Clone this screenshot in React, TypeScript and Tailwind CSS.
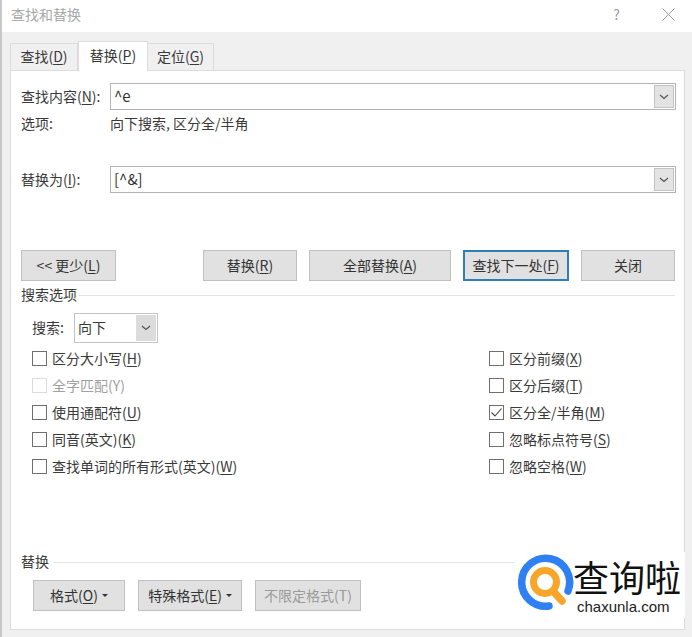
import React from 'react'

const Key = ({ k }: { k: string }) => (
  <>
    (<span className="underline underline-offset-2">{k}</span>)
  </>
)

const Chevron = () => (
  <svg width="10" height="6" viewBox="0 0 10 6" fill="none" stroke="#555" strokeWidth="1.2">
    <path d="M1 1l4 3.5L9 1" />
  </svg>
)

const Combo = ({ value }: { value: string }) => (
  <div className="flex h-[27px] w-[566px] items-center justify-between border border-[#b4b4b4] bg-white pr-[1px] pl-[3px] text-[#333]">
    <span className="pb-[3px] text-[15px] leading-none">{value}</span>
    <div className="flex h-[23px] w-[20px] items-center justify-center border border-[#c4c4c4] bg-[#e3e3e3]">
      <Chevron />
    </div>
  </div>
)

const Btn = ({
  w,
  children,
  focused,
  disabled,
}: {
  w: string
  children: React.ReactNode
  focused?: boolean
  disabled?: boolean
}) => (
  <button
    className={
      w +
      ' flex h-[31px] items-center justify-center border bg-[#e1e1e1] pb-[1px] ' +
      (focused ? 'border-2 border-[#2f7fb5] ' : 'border-[#c0c0c0] ') +
      (disabled ? 'text-[#9a9a9a]' : 'text-[#333]')
    }>
    {children}
  </button>
)

const Check = ({
  children,
  checked,
  disabled,
}: {
  children: React.ReactNode
  checked?: boolean
  disabled?: boolean
}) => (
  <div className={'flex h-[27px] items-center gap-[5px] ' + (disabled ? 'text-[#a0a0a0]' : 'text-[#3a3a3a]')}>
    <div
      className={
        'flex h-[15px] w-[15px] items-center justify-center border bg-white ' +
        (disabled ? 'border-[#dcdcdc]' : 'border-[#6f6f6f]')
      }>
      {checked && (
        <svg width="13" height="11" viewBox="0 0 13 11" fill="none" stroke="#444" strokeWidth="1.1">
          <path d="M1.5 5.5l3.5 3.5 6.5-7.5" />
        </svg>
      )}
    </div>
    <span className="pb-[1px]">{children}</span>
  </div>
)

const Caret = () => <span className="ml-[4px] inline-block border-x-[3px] border-t-[3px] border-x-transparent border-t-[#333]" />

const App = () => {
  return (
    <div
      className="relative flex h-[637px] w-[692px] flex-col overflow-hidden border-l-2 border-[#c8c8c8] bg-[#f0f0f0] text-[14px] text-[#3a3a3a]"
      style={{ fontFamily: '"Noto Sans CJK SC", "Noto Sans", sans-serif' }}>
      <header className="flex h-[32px] shrink-0 items-center justify-between bg-white pr-[17px] pb-[4px] pl-[9px]">
        <span className="text-[14px] text-[#a8a8a8]">查找和替换</span>
        <div className="flex items-center gap-[42px] text-[#9a9a9a]">
          <span className="text-[14px] leading-none">?</span>
          <svg width="13" height="13" viewBox="0 0 13 13" stroke="#9a9a9a" strokeWidth="1">
            <path d="M.5.5l12 12M12.5.5l-12 12" />
          </svg>
        </div>
      </header>

      <div className="flex h-[38px] shrink-0 items-end pl-[8px]">
        <div className="flex h-[27px] w-[68px] items-center justify-center border border-b-0 border-[#dcdcdc] bg-[#f0f0f0] pb-[2px]">
          查找<Key k="D" />
        </div>
        <div className="z-10 -mb-px flex h-[30px] w-[70px] items-center justify-center border border-b-0 border-[#dcdcdc] bg-white pb-[3px]">
          替换<Key k="P" />
        </div>
        <div className="flex h-[27px] w-[66px] items-center justify-center border border-b-0 border-l-0 border-[#dcdcdc] bg-[#f0f0f0] pb-[2px]">
          定位<Key k="G" />
        </div>
      </div>

      <main className="relative mr-[7px] ml-[8px] h-[560px] border border-[#dcdcdc] bg-white pt-[12px] pl-[10px]">
        <div className="flex items-center">
          <span className="w-[89px]">
            查找内容<Key k="N" />:
          </span>
          <Combo value="^e" />
        </div>
        <div className="mt-[1px] flex h-[24px] items-center">
          <span className="w-[89px]">选项:</span>
          <span>向下搜索, 区分全/半角</span>
        </div>
        <div className="mt-[31px] flex items-center">
          <span className="w-[89px]">
            替换为<Key k="I" />:
          </span>
          <Combo value="[^&]" />
        </div>

        <div className="mt-[57px] flex">
          <Btn w="w-[95px]">
            &lt;&lt; 更少<Key k="L" />
          </Btn>
          <div className="ml-[87px] flex gap-[12px]">
            <Btn w="w-[94px]">
              替换<Key k="R" />
            </Btn>
            <Btn w="w-[142px]">
              全部替换<Key k="A" />
            </Btn>
            <Btn w="w-[106px]" focused>
              查找下一处<Key k="F" />
            </Btn>
            <Btn w="w-[94px]">关闭</Btn>
          </div>
        </div>

        <div className="mt-[4px] flex h-[20px] items-center">
          <span className="pr-[1px] pb-[2px]">搜索选项</span>
          <div className="mr-[9px] h-px flex-1 bg-[#e4e4e4]" />
        </div>

        <div className="mt-[8px] flex items-center pl-[11px]">
          <span className="w-[42px] pb-[1px]">搜索:</span>
          <div className="flex h-[30px] w-[84px] items-center justify-between border border-[#c4c4c4] pr-[1px] pl-[3px]">
            <span className="pb-[1px]">向下</span>
            <div className="flex h-[26px] w-[20px] items-center justify-center bg-[#dcdcdc]">
              <Chevron />
            </div>
          </div>
        </div>

        <div className="mt-[2px] flex pl-[11px]">
          <div className="w-[457px]">
            <Check>
              区分大小写<Key k="H" />
            </Check>
            <Check disabled>全字匹配(Y)</Check>
            <Check>
              使用通配符<Key k="U" />
            </Check>
            <Check>
              同音(英文)<Key k="K" />
            </Check>
            <Check>
              查找单词的所有形式(英文)<Key k="W" />
            </Check>
          </div>
          <div>
            <Check>
              区分前缀<Key k="X" />
            </Check>
            <Check>
              区分后缀<Key k="T" />
            </Check>
            <Check checked>
              区分全/半角<Key k="M" />
            </Check>
            <Check>
              忽略标点符号<Key k="S" />
            </Check>
            <Check>
              忽略空格<Key k="W" />
            </Check>
          </div>
        </div>

        <div className="mt-[72px] flex h-[20px] items-center">
          <span className="pr-[4px] pb-[2px]">替换</span>
          <div className="mr-[9px] h-px flex-1 bg-[#e4e4e4]" />
        </div>
        <div className="mt-[8px] flex gap-[13px] pl-[12px]">
          <Btn w="w-[92px]">
            格式<Key k="O" />
            <Caret />
          </Btn>
          <Btn w="w-[104px]">
            特殊格式<Key k="E" />
            <Caret />
          </Btn>
          <Btn w="w-[106px]" disabled>
            不限定格式(T)
          </Btn>
        </div>
      </main>

      {/* logo */}
      <div className="absolute top-[552px] left-[513px] h-[66px] w-[170px] bg-white">
        <svg className="absolute top-[1px] left-[2px]" width="60" height="60" viewBox="0 0 60 60" fill="none">
          <path d="M51 38A24 24 0 1 0 32 53" stroke="#2f80f2" strokeWidth="7.5" strokeLinecap="round" />
          <circle cx="28" cy="29" r="11.5" stroke="#f8a62a" strokeWidth="7" />
          <path d="M36 38l9 10" stroke="#f8a62a" strokeWidth="7.5" strokeLinecap="round" />
        </svg>
        <span className="absolute top-[4px] left-[58px] text-[36px] leading-[40px] whitespace-nowrap text-[#111]">查询啦</span>
        <span
          className="absolute top-[46px] left-[62px] text-[15px] leading-[17px] text-[#222]"
          style={{ fontFamily: '"Liberation Sans", sans-serif' }}>
          chaxunla.com
        </span>
      </div>
    </div>
  )
}

export default App
